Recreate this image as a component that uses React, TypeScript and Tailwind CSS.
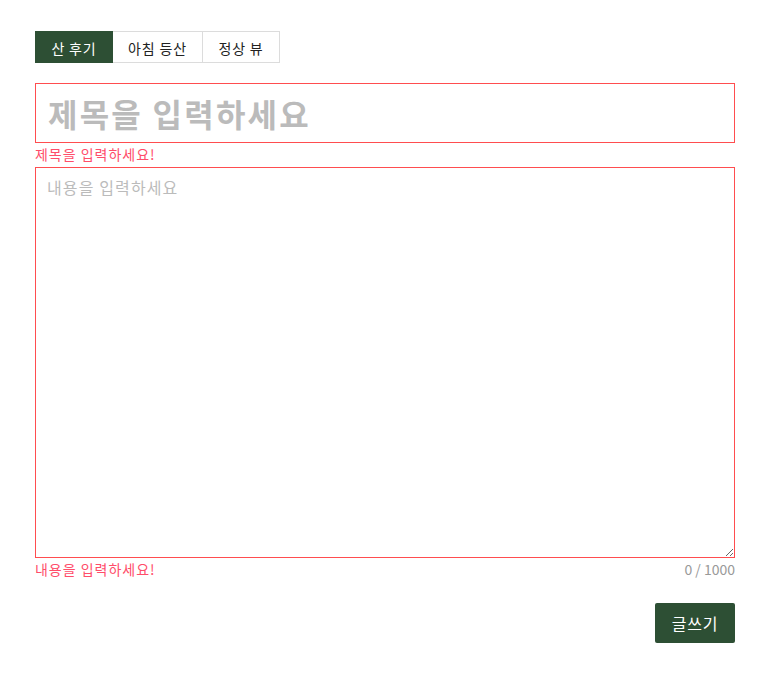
const tabs = [
  { label: '산 후기', w: 'w-[78px]' },
  { label: '아침 등산', w: 'w-[90px]' },
  { label: '정상 뷰', w: 'w-[77px]' },
];

export default function App() {
  return (
    <div
      className="w-[768px] h-[678px] bg-white pl-[35px] pt-[31px]"
      style={{ fontFamily: '"Noto Sans CJK KR", "Noto Sans", sans-serif' }}
    >
      <div className="w-[700px]">
        <div className="flex">
          {tabs.map((t, i) => (
            <button
              key={t.label}
              className={
                i === 0
                  ? `${t.w} h-8 text-sm leading-8 tracking-[0.06em] bg-[#2d4f34] text-white border border-[#2d4f34]`
                  : `${t.w} h-8 text-sm leading-8 tracking-[0.06em] bg-white text-[#222] border border-[#dcdcdc] border-l-0`
              }
            >
              {t.label}
            </button>
          ))}
        </div>

        <div className="mt-5">
          <input
            className="w-full h-[60px] border border-solid border-[#ff4d4f] px-3 text-[32px] tracking-[0.07em] font-bold text-[#333] placeholder:text-[#bbb] outline-none"
            placeholder="제목을 입력하세요"
          />
          <p className="text-sm leading-5 mt-[1px] tracking-[0.07em] text-[#ff4d6a]">제목을 입력하세요!</p>
        </div>

        <div className="mt-[3px]">
          <div className="border border-[#ff4d4f]">
            <textarea
              className="block w-full h-[389px] border-0 px-[11px] py-[7px] text-base leading-6 tracking-[0.07em] text-[#333] placeholder:text-[#bbb] outline-none"
              placeholder="내용을 입력하세요"
            />
          </div>
          <div className="flex justify-between text-sm leading-5 mt-[1px]">
            <span className="text-[#ff4d6a] tracking-[0.07em]">내용을 입력하세요!</span>
            <span className="text-[#999]">0 / 1000</span>
          </div>
        </div>

        <div className="flex justify-end mt-6">
          <button className="w-20 h-10 rounded-[2px] bg-[#2d4f34] text-white text-base tracking-[0.05em]">글쓰기</button>
        </div>
      </div>
    </div>
  );
}
